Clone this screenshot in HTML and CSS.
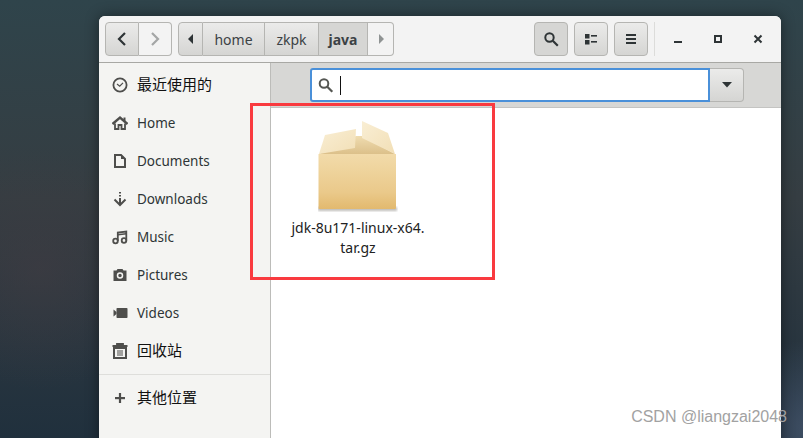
FILE: index.html
```html
<!DOCTYPE html>
<html lang="zh">
<head>
  <meta charset="UTF-8">
  <title>java - Files</title>
  <link rel="stylesheet" href="styles.css">
</head>
<body>
  <div class="window">
    <header class="toolbar">
      <div class="btn-group nav-group">
        <button class="tool-btn nav-btn">
          <svg width="16" height="16" viewBox="0 0 16 16" fill="none" stroke="#2e3436" stroke-width="2.2"><path d="M11 2 5 8l6 6"/></svg>
        </button>
        <button class="tool-btn nav-btn flat">
          <svg width="16" height="16" viewBox="0 0 16 16" fill="none" stroke="#a4a6a6" stroke-width="2.2"><path d="m5 2 6 6-6 6"/></svg>
        </button>
      </div>

      <div class="btn-group path-group">
        <button class="tool-btn path-arrow">
          <svg width="8" height="10" viewBox="0 0 8 10"><path d="M6 0v10L1 5z" fill="#2e3436"/></svg>
        </button>
        <button class="tool-btn path-home">home</button>
        <button class="tool-btn path-zkpk">zkpk</button>
        <button class="tool-btn path-java active">java</button>
        <button class="tool-btn path-arrow flat">
          <svg width="8" height="10" viewBox="0 0 8 10"><path d="M2 0v10l5-5z" fill="#8f9393"/></svg>
        </button>
      </div>

      <div class="toolbar-right">
        <button class="tool-btn square active">
          <svg width="16" height="16" viewBox="0 0 16 16" fill="none" stroke="#2e3436"><circle cx="6.5" cy="6.5" r="4.2" stroke-width="2"/><path d="m9.8 9.8 5 5" stroke-width="2.2"/></svg>
        </button>
        <button class="tool-btn square">
          <svg width="16" height="16" viewBox="0 0 16 16" fill="#2e3436"><rect x="2" y="3" width="4.5" height="4.500"/><rect x="2" y="9" width="4.5" height="4.500"/><rect x="8" y="4" width="6" height="1.600"/><rect x="8" y="10" width="6" height="1.600"/></svg>
        </button>
        <button class="tool-btn square">
          <svg width="16" height="16" viewBox="0 0 16 16" fill="#2e3436"><rect x="3" y="3" width="10" height="2"/><rect x="3" y="7" width="10" height="2"/><rect x="3" y="11" width="10" height="2"/></svg>
        </button>
        <span class="separator"></span>
        <div class="win-controls">
          <svg width="12" height="12" viewBox="0 0 12 12"><rect x="2" y="8" width="8" height="2" fill="#2e3436"/></svg>
          <svg width="12" height="12" viewBox="0 0 12 12" fill="none" stroke="#2e3436" stroke-width="2"><rect x="3" y="3" width="6" height="6"/></svg>
          <svg width="12" height="12" viewBox="0 0 12 12" fill="none" stroke="#2e3436" stroke-width="2"><path d="m2.5 2.5 7 7M9.5 2.5l-7 7"/></svg>
        </div>
      </div>
    </header>

    <div class="main">
      <aside class="sidebar">
        <ul class="places">
          <li class="place">
            <svg class="place-icon" viewBox="0 0 16 16" fill="none" stroke="#4e4e4c"><circle cx="8" cy="8" r="6.600" stroke-width="1.800"/><path d="M5 7 7.700 9.200 11 5.800" stroke-width="1.200"/></svg>
            <span class="cjk">最近使用的</span>
          </li>
          <li class="place">
            <svg class="place-icon" viewBox="0 0 16 16" fill="none" stroke="#4e4e4c"><path d="M.5 9 8 2.500 15.500 9" stroke-width="2.400"/><path d="M3 8.500V14h3.500V10h3v4H13V8.500" stroke-width="1.800"/><rect x="11.500" y="2.500" width="2" height="3.500" fill="#4e4e4c" stroke="none"/></svg>
            <span>Home</span>
          </li>
          <li class="place">
            <svg class="place-icon" viewBox="0 0 16 16" fill="none" stroke="#4e4e4c" stroke-width="2"><path d="M3 2h6l4 4v8H3z"/><path d="M9 1.500 13.500 6H9z" fill="#4e4e4c" stroke="none"/></svg>
            <span>Documents</span>
          </li>
          <li class="place">
            <svg class="place-icon" viewBox="0 0 16 16" fill="none" stroke="#4e4e4c" stroke-width="2"><path d="M8 1v1.500M8 4v1.500M8 7v6"/><path d="M2.500 8.500 8 14l5.500-5.500"/></svg>
            <span>Downloads</span>
          </li>
          <li class="place">
            <svg class="place-icon" viewBox="0 0 16 16" fill="none" stroke="#4e4e4c" stroke-width="1.800"><circle cx="3.500" cy="12" r="2.300"/><circle cx="12" cy="11.500" r="2.300"/><path d="M5.800 12V3.500l8.500-1v9"/><path d="M5.800 5.800l8.500-1" stroke-width="1.500"/></svg>
            <span>Music</span>
          </li>
          <li class="place">
            <svg class="place-icon" viewBox="0 0 16 16"><path d="M1.500 3.500h3l1-1.500h5l1 1.500h3V14h-13z" fill="#4e4e4c"/><circle cx="8" cy="8.500" r="2.500" fill="none" stroke="#f4f4f2" stroke-width="1.500"/></svg>
            <span>Pictures</span>
          </li>
          <li class="place">
            <svg class="place-icon" viewBox="0 0 16 16" fill="#4e4e4c"><rect x="4.500" y="3" width="11" height="10" rx=".8"/><path d="M1.500 4.500 4.500 7v2l-3 2.500z"/></svg>
            <span>Videos</span>
          </li>
          <li class="place">
            <svg class="place-icon" viewBox="0 0 16 16" fill="none" stroke="#4e4e4c"><path d="M.5 3h15M5 3V1h6v2" stroke-width="1.800"/><path d="M2 5h12v10H2z" stroke-width="2"/><path d="M6 7v6M8 7v6M10 7v6" stroke-width="1"/></svg>
            <span class="cjk">回收站</span>
          </li>
        </ul>
        <div class="other">
          <svg class="place-icon" viewBox="0 0 16 16" fill="#4e4e4c"><rect x="3" y="7" width="10" height="2.200"/><rect x="6.900" y="3" width="2.200" height="10"/></svg>
          <span class="cjk">其他位置</span>
        </div>
      </aside>

      <section class="content">
        <div class="searchbar">
          <div class="entry">
            <svg width="16" height="16" viewBox="0 0 16 16" fill="none" stroke="#555753"><circle cx="6" cy="6.500" r="4.300" stroke-width="2"/><path d="m9.300 9.800 5 5" stroke-width="2.200"/></svg>
            <span class="caret"></span>
          </div>
          <button class="tool-btn drop-btn">
            <svg width="12" height="6" viewBox="0 0 12 6"><path d="M1 0h10L6 5.500z" fill="#2e3436"/></svg>
          </button>
        </div>

        <div class="files">
          <div class="file">
            <svg class="file-icon" width="80" height="92" viewBox="0 0 80 92">
              <defs>
                <linearGradient id="boxFront" x1="0" y1="0" x2="0" y2="1">
                  <stop offset="0" stop-color="#f2dbaa"/>
                  <stop offset=".7" stop-color="#eac98a"/>
                  <stop offset="1" stop-color="#e2b96e"/>
                </linearGradient>
                <linearGradient id="flap" x1="0" y1="0" x2="1" y2="1">
                  <stop offset="0" stop-color="#f9eed4"/>
                  <stop offset="1" stop-color="#f2dfb6"/>
                </linearGradient>
                <linearGradient id="inside" x1="0" y1="0" x2="0" y2="1">
                  <stop offset="0" stop-color="#efdcb0"/>
                  <stop offset="1" stop-color="#dcc08a"/>
                </linearGradient>
                <filter id="soft"><feGaussianBlur stdDeviation="1"/></filter>
              </defs>
              <rect x="0" y="87" width="79" height="4" fill="#8d8a84" opacity=".55" filter="url(#soft)"/>
              <path d="M1 34 38 16H44L77 34z" fill="url(#inside)"/>
              <path d="M1 34 7 15 38 9 37 28z" fill="url(#flap)"/>
              <path d="M44 1 70 13 77 34 44 18z" fill="url(#flap)"/>
              <path d="M.5 34h77.500v54a1 1 0 0 1-1 1H1.500a1 1 0 0 1-1-1z" fill="url(#boxFront)"/>
            </svg>
            <div class="file-name">jdk-8u171-linux-x64.<br>tar.gz</div>
          </div>
        </div>
      </section>
    </div>
  </div>

  <div class="highlight"></div>
  <div class="watermark">CSDN @liangzai2048</div>
</body>
</html>
```

FILE: styles.css
```css
html, body {
  height: 100%;
}

body {
  margin: 0;
  overflow: hidden;
  position: relative;
  font-family: 'Noto Sans', sans-serif;
  font-size: 13px;
  color: #2e3436;
  background-color: #2c3c46;
  background-image:
    radial-gradient(circle at 810px 430px, rgba(66, 82, 104, 0.9), transparent 90px),
    radial-gradient(circle at 40px 270px, rgba(66, 60, 66, 0.55), transparent 120px),
    linear-gradient(180deg, #2f444b 0%, #353d42 45%, #20303d 100%);
}

.window {
  box-sizing: border-box;
  width: 682px;
  height: 430px;
  margin: 16px 0 0 99px;
  display: flex;
  flex-direction: column;
  background-color: #f4f4f2;
  border-radius: 6px 6px 0 0;
  box-shadow: 0 0 14px rgba(0, 0, 0, 0.45);
}

/* toolbar */
.toolbar {
  box-sizing: border-box;
  height: 47px;
  flex-shrink: 0;
  display: flex;
  align-items: flex-start;
  padding: 6px 0 0 6px;
  background-color: #f3f3f3;
  border-bottom: 1px solid #a8a8a4;
  border-radius: 6px 6px 0 0;
}

.btn-group {
  display: flex;
  height: 34px;
}

.tool-btn {
  box-sizing: border-box;
  height: 34px;
  margin: 0;
  padding: 0;
  display: flex;
  align-items: center;
  justify-content: center;
  font-family: inherit;
  font-size: 14px;
  color: #3c4245;
  background: linear-gradient(180deg, #ebebea 0%, #d5d5d3 100%);
  border: 1px solid #b5b5b2;
  border-radius: 4px;
}

.btn-group .tool-btn {
  border-radius: 0;
  border-left-width: 0;
}

.btn-group .tool-btn:first-child {
  border-left-width: 1px;
  border-radius: 4px 0 0 4px;
}

.btn-group .tool-btn:last-child {
  border-radius: 0 4px 4px 0;
  width: 26px;
}

.tool-btn.flat {
  background: #f3f3f3;
}

.tool-btn.active {
  background: #d6d6d4;
}

.nav-btn {
  width: 34px;
}

.btn-group.nav-group .nav-btn:last-child {
  width: 33px;
}

.path-group {
  margin-left: 6px;
}

.path-arrow {
  width: 25px;
}

.path-home {
  width: 62px;
}

.path-zkpk {
  width: 54px;
}

.path-java {
  width: 49px;
  font-weight: 700;
}

.toolbar-right {
  margin-left: auto;
  display: flex;
  align-items: flex-start;
  gap: 6px;
}

.square {
  width: 34px;
}

.separator {
  width: 1px;
  height: 34px;
  background-color: #dcdcda;
}

.win-controls {
  width: 120px;
  height: 34px;
  margin-left: -3px;
  margin-right: 3px;
  display: flex;
  align-items: center;
  justify-content: space-around;
}

/* body of the window */
.main {
  flex: 1;
  display: flex;
  min-height: 0;
}

.sidebar {
  box-sizing: border-box;
  width: 172px;
  flex-shrink: 0;
  background-color: #f4f4f2;
  border-right: 1px solid #bcbcb9;
}

.places {
  list-style: none;
  margin: 0;
  padding: 3px 0 4px;
  border-bottom: 1px solid #dededb;
}

.place,
.other {
  height: 38px;
  display: flex;
  align-items: center;
  padding-left: 13px;
  gap: 9px;
  font-size: 13.500px;
  color: #2e3436;
}

.other {
  margin-top: 4px;
}

.place-icon {
  width: 16px;
  height: 16px;
  flex-shrink: 0;
}

.cjk {
  margin-bottom: 3px;
  font-family: 'Noto Sans CJK SC', sans-serif;
  font-size: 15px;
  color: #111;
}

.content {
  flex: 1;
  display: flex;
  flex-direction: column;
  min-width: 0;
  background-color: #fff;
}

.searchbar {
  box-sizing: border-box;
  height: 45px;
  flex-shrink: 0;
  display: flex;
  padding: 5px 0 0 39px;
  background-color: #d7d7d5;
  border-bottom: 1px solid #c4c4c2;
}

.entry {
  box-sizing: border-box;
  width: 400px;
  height: 34px;
  display: flex;
  align-items: center;
  gap: 6px;
  padding-left: 6px;
  background-color: #fff;
  border: 2px solid #4a90d9;
  border-radius: 3px 0 0 3px;
}

.caret {
  width: 1px;
  height: 19px;
  background-color: #111;
}

.drop-btn {
  width: 34px;
  border-left: none;
  border-radius: 0 4px 4px 0;
}

.files {
  flex: 1;
  padding: 12px 0 0 17px;
}

.file {
  width: 140px;
  display: flex;
  flex-direction: column;
  align-items: center;
}

.file-name {
  margin-top: 6px;
  font-size: 14px;
  line-height: 20px;
  text-align: center;
  color: #222;
}

/* red box drawn over the screenshot */
.highlight {
  position: absolute;
  left: 250px;
  top: 103px;
  width: 239px;
  height: 171px;
  border: 3px solid #f93a3f;
}

.watermark {
  position: absolute;
  right: 16px;
  top: 408px;
  font-family: 'Liberation Sans', sans-serif;
  font-size: 16px;
  color: #a2a2a2;
  white-space: nowrap;
}
```
